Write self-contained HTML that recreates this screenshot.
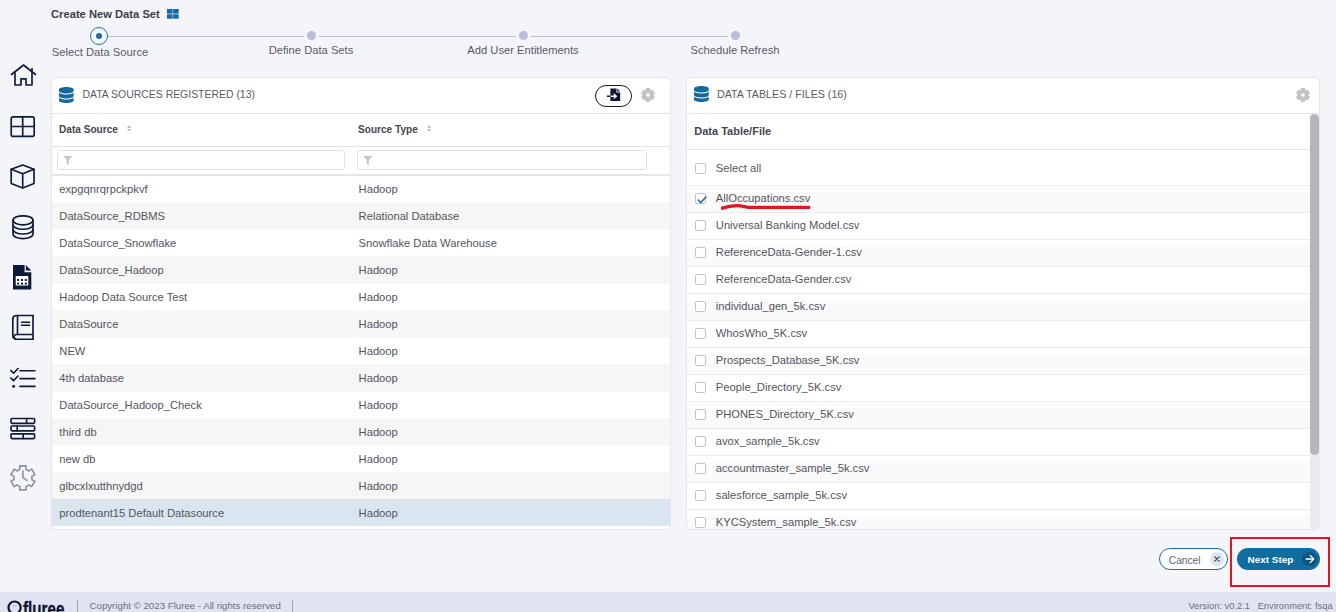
<!DOCTYPE html>
<html><head><meta charset="utf-8">
<style>
*{box-sizing:border-box;margin:0;padding:0}
html,body{width:1336px;height:612px;overflow:hidden}
body{background:#f4f5f9;font-family:"Liberation Sans",sans-serif;color:#4f4f55;position:relative}
.abs{position:absolute}
.title{left:51px;top:7.5px;font-size:11.2px;font-weight:bold;color:#3e3e48;white-space:nowrap}
.step-lbl{font-size:11.2px;color:#5a5a66;white-space:nowrap;transform:translateX(-50%)}
.panel{background:#fff;border:1px solid #e6e6ea;border-radius:5px;overflow:hidden}
.ptitle{font-size:10.45px;color:#5b5b66;white-space:nowrap}
.row{position:absolute;left:0;height:27px;font-size:11.2px;color:#55555d;white-space:nowrap}
.row span{position:absolute;top:7px}
.hr{position:absolute;height:1px;background:#e4e4e6}
.cb{position:absolute;width:10.4px;height:10.4px;border:1.3px solid #c4c4c6;border-radius:2px;background:#fff}
.foot{left:0;top:592px;width:1336px;height:20px;background:#e1e3f0}
.thd{font-size:10.1px;font-weight:bold;color:#45454e;white-space:nowrap;line-height:12px}
.thd2{font-size:11px;font-weight:bold;color:#45454e;white-space:nowrap;line-height:12px}
.sort{}
.finput{position:absolute;height:19.8px;border:1px solid #e2e2e4;border-radius:3px;background:#fff}
.rtxt{font-size:11.2px;color:#55555d;white-space:nowrap}
.frow{position:absolute;left:0;width:623px;height:27px;border-top:1px solid #ececee;font-size:11.2px;color:#55555d;white-space:nowrap;line-height:26px}
.frow.g{background:linear-gradient(#fff 0,#fff 6px,#fafafa 6px)}
.frow span{position:absolute;left:28.8px;top:-1.4px}
.frow .cb{left:8.3px;top:7.2px}
.row{line-height:27px}
.row span{top:0.8px}
</style></head><body>

<!-- sidebar icons -->
<svg class="abs" style="left:0;top:55px" width="48" height="450" viewBox="0 55 48 450" fill="none" stroke="#0d1a3a" stroke-width="1.65" stroke-linejoin="round" stroke-linecap="round">
  <!-- house -->
  <path d="M11.5 74.5 L23.5 65 L35.5 74.5"/>
  <path d="M32 68.5 V85 H26 V78.8 H21 V85 H15 V72"/>
  <!-- grid -->
  <rect x="11.2" y="116.8" width="23" height="19.6" rx="2"/>
  <path d="M22.7 117 V136 M11.5 126.5 H34"/>
  <!-- cube -->
  <path d="M22.7 165 L34 169.3 V183.5 L22.7 188 L11.2 183.5 V169.3 Z"/>
  <path d="M11.2 169.3 L22.7 173.8 L34 169.3 M22.7 173.8 V188"/>
  <!-- database -->
  <ellipse cx="23" cy="220.3" rx="10" ry="4.5"/>
  <path d="M13 220.3 V234 A10 4.6 0 0 0 33 234 V220.3"/>
  <path d="M13 224.8 A10 4.5 0 0 0 33 224.8 M13 229.5 A10 4.5 0 0 0 33 229.5"/>
  <!-- book -->
  <path d="M33 315.5 H16 A3.5 3.5 0 0 0 12.8 319 V336 A3.5 3.5 0 0 0 16 339.2 H33"/>
  <path d="M33 315.5 V339.2 M33 334.5 H16 A2.4 2.4 0 0 0 16 339.2"/>
  <path d="M17.5 316 V334.5"/>
  <path d="M21.5 322.2 H29.5 M21.5 325.2 H29.5"/>
  <!-- checklist -->
  <path d="M10.8 370.5 L13.5 373.2 L18 368.5 M10.8 378 L13.5 380.7 L18 376"/>
  <path d="M20 370.7 H35 M20 378.6 H35 M20 386.4 H35"/>
  <circle cx="13.6" cy="386.3" r="1.5" fill="#0d1a3a" stroke="none"/>
  <!-- table rows -->
  <rect x="11" y="418.5" width="23.6" height="4.8" rx="1"/>
  <rect x="11" y="426" width="23.6" height="4.8" rx="1"/>
  <rect x="11" y="433.8" width="23.6" height="4.8" rx="1"/>
  <path d="M26.6 418.5 V423.3 M17.2 426 V430.8 M23.2 433.8 V438.6"/>
</svg>
<svg class="abs" style="left:0;top:255px" width="48" height="40" viewBox="0 255 48 40">
  <path fill="#0d1a3a" d="M13 265 H24.6 V272.3 H31.3 V289.5 H13 Z M25.8 265 L31.3 270.5 H25.8 Z"/>
  <rect x="15.7" y="276" width="12.6" height="9.5" fill="#fff"/>
  <g fill="#0d1a3a"><rect x="17.2" y="279" width="2" height="2"/><rect x="21" y="279" width="2" height="2"/><rect x="24.8" y="279" width="2" height="2"/><rect x="17.2" y="282.6" width="2" height="2"/><rect x="21" y="282.6" width="2" height="2"/><rect x="24.8" y="282.6" width="2" height="2"/></g>
  
</svg>
<svg class="abs" style="left:0;top:460px" width="48" height="36" viewBox="0 460 48 36" fill="none" stroke="#8b90a4" stroke-width="1.6" stroke-linejoin="round">
  <path d="M19.90 469.20 L19.69 465.92 L26.11 465.92 L25.90 469.20 L28.94 470.96 L31.67 469.13 L34.88 474.69 L31.93 476.14 L31.93 479.66 L34.88 481.11 L31.67 486.67 L28.94 484.84 L25.90 486.60 L26.11 489.88 L19.69 489.88 L19.90 486.60 L16.86 484.84 L14.13 486.67 L10.92 481.11 L13.87 479.66 L13.87 476.14 L10.92 474.69 L14.13 469.13 L16.86 470.96Z"/>
  <path d="M22.9 471 V477.4 L26.8 480.4" stroke-linecap="round"/>
</svg>

<!-- title -->
<div class="abs title">Create New Data Set</div>
<svg class="abs" style="left:167.4px;top:8.8px" width="12" height="10" viewBox="0 0 12 10"><g fill="#136aa6"><rect x="0" y="0" width="5.6" height="4.6"/><rect x="6.1" y="0" width="5.6" height="4.6"/><rect x="0" y="5.3" width="5.6" height="4.4"/><rect x="6.1" y="5.3" width="5.6" height="4.4"/></g></svg>

<!-- stepper -->
<div class="abs" style="left:107px;top:36px;width:628px;height:1px;background:#b9bdd7"></div>
<div class="abs" style="left:90px;top:27px;width:18px;height:18px;border:1.5px solid #2878a6;border-radius:50%;background:#f4f5f9"></div>
<div class="abs" style="left:95.7px;top:32.7px;width:6.6px;height:6.6px;border-radius:50%;background:#1f6c9c"></div>
<div class="abs" style="left:307px;top:31px;width:9px;height:9px;border-radius:50%;background:#b9bdd7;box-shadow:0 0 0 3px #f4f5f9"></div>
<div class="abs" style="left:519px;top:31px;width:9px;height:9px;border-radius:50%;background:#b9bdd7;box-shadow:0 0 0 3px #f4f5f9"></div>
<div class="abs" style="left:731px;top:31px;width:9px;height:9px;border-radius:50%;background:#b9bdd7;box-shadow:0 0 0 3px #f4f5f9"></div>
<div class="abs step-lbl" style="left:100px;top:46.2px">Select Data Source</div>
<div class="abs step-lbl" style="left:311px;top:43.8px">Define Data Sets</div>
<div class="abs step-lbl" style="left:523px;top:43.8px">Add User Entitlements</div>
<div class="abs step-lbl" style="left:735px;top:43.8px">Schedule Refresh</div>

<!-- LEFT PANEL -->
<div class="abs panel" style="left:51px;top:77px;width:620px;height:453px">
  <svg class="abs" style="left:7px;top:9px" width="14.6" height="16" viewBox="0 0 448 512" preserveAspectRatio="none"><path fill="#15699e" d="M448 80v48c0 44.2-100.3 80-224 80S0 172.2 0 128V80C0 35.8 100.3 0 224 0S448 35.8 448 80zM393.2 214.7c20.8-7.4 39.9-16.9 54.8-28.6V288c0 44.2-100.3 80-224 80S0 332.2 0 288V186.1c14.9 11.8 34 21.2 54.8 28.6C99.7 230.7 159.5 240 224 240s124.3-9.3 169.2-25.3zM0 346.1c14.9 11.8 34 21.2 54.8 28.6C99.7 390.7 159.5 400 224 400s124.3-9.3 169.2-25.3c20.8-7.4 39.9-16.9 54.8-28.6V432c0 44.2-100.3 80-224 80S0 476.2 0 432V346.1z"/></svg>
  <div class="abs ptitle" style="left:30.5px;top:10.7px">DATA SOURCES REGISTERED (13)</div>
  <div class="abs" style="left:543px;top:7px;width:37px;height:22px;border:1.2px solid #141a3a;border-radius:11px"></div>
  <svg class="abs" style="left:554px;top:9.5px" width="16" height="14" viewBox="606 87.5 16 14"><path fill="#0e1636" d="M610.4 87.9 H616.5 V92 H620.2 V100.5 H610.4 Z M617.3 87.9 L620.2 90.9 H617.3 Z"/><path d="M606.9 95.7 H616" stroke="#0e1636" stroke-width="1.4"/><path d="M610.6 95.7 H615.6" stroke="#fff" stroke-width="1.4"/><path fill="#fff" d="M613.8 92.6 L617.3 95.7 L613.8 98.8 Z"/></svg>
  <svg class="abs" style="left:589px;top:10px" width="14" height="14" viewBox="0 0 14 14"><path fill="#c4c4c6" fill-rule="evenodd" stroke="#c4c4c6" stroke-width="1" stroke-linejoin="round" d="M4.97 2.43 L5.27 0.53 L8.73 0.53 L9.03 2.43 L9.94 2.95 L11.74 2.26 L13.47 5.27 L11.97 6.48 L11.97 7.52 L13.47 8.73 L11.74 11.74 L9.94 11.05 L9.03 11.57 L8.73 13.47 L5.27 13.47 L4.97 11.57 L4.06 11.05 L2.26 11.74 L0.53 8.73 L2.03 7.52 L2.03 6.48 L0.53 5.27 L2.26 2.26 L4.06 2.95Z M7 4.7 A2.3 2.3 0 1 0 7 9.3 A2.3 2.3 0 1 0 7 4.7Z"/></svg>
  <div class="hr" style="top:35px;left:0;width:618px"></div>
  <div class="abs thd" style="left:7px;top:46px">Data Source</div>
  <svg class="abs sort" style="left:74.6px;top:47.2px" width="4.4" height="6.6" viewBox="0 0 5 7"><path fill="#b4b4b8" d="M2.5 0 L5 2.8 H0Z M0 4.2 H5 L2.5 7Z"/></svg>
  <div class="abs thd" style="left:306px;top:46px">Source Type</div>
  <svg class="abs sort" style="left:374.6px;top:47.2px" width="4.4" height="6.6" viewBox="0 0 5 7"><path fill="#b4b4b8" d="M2.5 0 L5 2.8 H0Z M0 4.2 H5 L2.5 7Z"/></svg>
  <div class="hr" style="top:68px;left:0;width:618px"></div>
  <div class="abs finput" style="left:5.4px;top:72.4px;width:288px"></div>
  <div class="abs finput" style="left:305.4px;top:72.4px;width:290px"></div>
  <svg class="abs" style="left:11px;top:77.8px" width="9.5" height="9.2" viewBox="0 0 9 9"><path fill="#c9c9cc" d="M0 0 H9 L5.6 4.2 V9 L3.4 7.6 V4.2Z"/></svg>
  <svg class="abs" style="left:311px;top:77.8px" width="9.5" height="9.2" viewBox="0 0 9 9"><path fill="#c9c9cc" d="M0 0 H9 L5.6 4.2 V9 L3.4 7.6 V4.2Z"/></svg>
  <div class="hr" style="top:96px;left:0;width:618px;height:2px;background:#e6e6e8"></div>
<div class="row" style="top:97.00px;height:27px;width:618px;background:transparent"><span style="left:7.3px">expgqnrqrpckpkvf</span><span style="left:306.6px">Hadoop</span></div>
<div class="row" style="top:124.00px;height:27.5px;width:618px;background:#f6f6f6"><span style="left:7.3px">DataSource_RDBMS</span><span style="left:306.6px">Relational Database</span></div>
<div class="row" style="top:151.00px;height:27px;width:618px;background:transparent"><span style="left:7.3px">DataSource_Snowflake</span><span style="left:306.6px">Snowflake Data Warehouse</span></div>
<div class="row" style="top:178.00px;height:27.5px;width:618px;background:#f6f6f6"><span style="left:7.3px">DataSource_Hadoop</span><span style="left:306.6px">Hadoop</span></div>
<div class="row" style="top:205.00px;height:27px;width:618px;background:transparent"><span style="left:7.3px">Hadoop Data Source Test</span><span style="left:306.6px">Hadoop</span></div>
<div class="row" style="top:232.00px;height:27.5px;width:618px;background:#f6f6f6"><span style="left:7.3px">DataSource</span><span style="left:306.6px">Hadoop</span></div>
<div class="row" style="top:259.00px;height:27px;width:618px;background:transparent"><span style="left:7.3px">NEW</span><span style="left:306.6px">Hadoop</span></div>
<div class="row" style="top:286.00px;height:27.5px;width:618px;background:#f6f6f6"><span style="left:7.3px">4th database</span><span style="left:306.6px">Hadoop</span></div>
<div class="row" style="top:313.00px;height:27px;width:618px;background:transparent"><span style="left:7.3px">DataSource_Hadoop_Check</span><span style="left:306.6px">Hadoop</span></div>
<div class="row" style="top:340.00px;height:27.5px;width:618px;background:#f6f6f6"><span style="left:7.3px">third db</span><span style="left:306.6px">Hadoop</span></div>
<div class="row" style="top:367.00px;height:27px;width:618px;background:transparent"><span style="left:7.3px">new db</span><span style="left:306.6px">Hadoop</span></div>
<div class="row" style="top:394.00px;height:27.5px;width:618px;background:#f6f6f6"><span style="left:7.3px">glbcxlxutthnydgd</span><span style="left:306.6px">Hadoop</span></div>
<div class="row" style="top:421.40px;height:26.6px;width:618px;background:#d9e6f0"><span style="left:7.3px">prodtenant15 Default Datasource</span><span style="left:306.6px">Hadoop</span></div>
</div>

<!-- RIGHT PANEL -->
<div class="abs panel" style="left:686px;top:77px;width:634px;height:453px">
  <svg class="abs" style="left:6.8px;top:8px" width="14.8" height="16" viewBox="0 0 448 512" preserveAspectRatio="none"><path fill="#15699e" d="M448 80v48c0 44.2-100.3 80-224 80S0 172.2 0 128V80C0 35.8 100.3 0 224 0S448 35.8 448 80zM393.2 214.7c20.8-7.4 39.9-16.9 54.8-28.6V288c0 44.2-100.3 80-224 80S0 332.2 0 288V186.1c14.9 11.8 34 21.2 54.8 28.6C99.7 230.7 159.5 240 224 240s124.3-9.3 169.2-25.3zM0 346.1c14.9 11.8 34 21.2 54.8 28.6C99.7 390.7 159.5 400 224 400s124.3-9.3 169.2-25.3c20.8-7.4 39.9-16.9 54.8-28.6V432c0 44.2-100.3 80-224 80S0 476.2 0 432V346.1z"/></svg>
  <div class="abs ptitle" style="left:30px;top:10px;font-size:10.7px">DATA TABLES / FILES (16)</div>
  <svg class="abs" style="left:609px;top:10px" width="14" height="14" viewBox="0 0 14 14"><path fill="#c4c4c6" fill-rule="evenodd" stroke="#c4c4c6" stroke-width="1" stroke-linejoin="round" d="M4.97 2.43 L5.27 0.53 L8.73 0.53 L9.03 2.43 L9.94 2.95 L11.74 2.26 L13.47 5.27 L11.97 6.48 L11.97 7.52 L13.47 8.73 L11.74 11.74 L9.94 11.05 L9.03 11.57 L8.73 13.47 L5.27 13.47 L4.97 11.57 L4.06 11.05 L2.26 11.74 L0.53 8.73 L2.03 7.52 L2.03 6.48 L0.53 5.27 L2.26 2.26 L4.06 2.95Z M7 4.7 A2.3 2.3 0 1 0 7 9.3 A2.3 2.3 0 1 0 7 4.7Z"/></svg>
  <div class="hr" style="top:35px;left:0;width:632px"></div>
  <div class="abs thd2" style="left:7.3px;top:47px">Data Table/File</div>
  <div class="hr" style="top:71px;left:0;width:623px"></div>
  <i class="cb" style="left:8.3px;top:85.2px"></i>
  <div class="abs rtxt" style="left:28.8px;top:76.5px;line-height:27px">Select all</div>
<div class="frow g" style="top:107px"><i class="cb"></i><svg class="abs" style="left:9.5px;top:10px" width="11" height="8" viewBox="0 0 11 8"><path d="M0.7 3.5 L3.75 6.6 L9.3 0.5" fill="none" stroke="#1f6ea3" stroke-width="1.5"/></svg><span>AllOccupations.csv</span></div>
<div class="frow" style="top:134px;background:transparent"><i class="cb"></i><span>Universal Banking Model.csv</span></div>
<div class="frow g" style="top:161px"><i class="cb"></i><span>ReferenceData-Gender-1.csv</span></div>
<div class="frow" style="top:188px;background:transparent"><i class="cb"></i><span>ReferenceData-Gender.csv</span></div>
<div class="frow g" style="top:215px"><i class="cb"></i><span>individual_gen_5k.csv</span></div>
<div class="frow" style="top:242px;background:transparent"><i class="cb"></i><span>WhosWho_5K.csv</span></div>
<div class="frow g" style="top:269px"><i class="cb"></i><span>Prospects_Database_5K.csv</span></div>
<div class="frow" style="top:296px;background:transparent"><i class="cb"></i><span>People_Directory_5K.csv</span></div>
<div class="frow g" style="top:323px"><i class="cb"></i><span>PHONES_Directory_5K.csv</span></div>
<div class="frow" style="top:350px;background:transparent"><i class="cb"></i><span>avox_sample_5k.csv</span></div>
<div class="frow g" style="top:377px"><i class="cb"></i><span>accountmaster_sample_5k.csv</span></div>
<div class="frow" style="top:404px;background:transparent"><i class="cb"></i><span>salesforce_sample_5k.csv</span></div>
<div class="frow g" style="top:431px"><i class="cb"></i><span>KYCSystem_sample_5k.csv</span></div>
  <div class="abs" style="left:623px;top:36px;width:9px;height:416px;background:#ebebef;border-radius:4.5px"></div>
  <div class="abs" style="left:623px;top:36px;width:9px;height:341px;background:#b6b6b8;border-radius:4.5px"></div>
  <svg class="abs" style="left:34px;top:125px" width="92" height="8" viewBox="0 0 92 8"><path d="M1.5 5.2 C6 3.5 11 2.5 16 2.6 C22 2.7 24 4.4 28 4.4 L87.8 4.4" fill="none" stroke="#e0191e" stroke-width="3.4" stroke-linecap="round"/></svg>
</div>

<!-- buttons -->
<div class="abs" style="left:1159px;top:548px;width:69px;height:22px;border:1px solid #1e6f9e;border-radius:11px;background:#fff"></div>
<div class="abs" style="left:1168.8px;top:549.6px;line-height:22px;font-size:10.2px;color:#5b6577;white-space:nowrap">Cancel</div>
<div class="abs" style="left:1210px;top:552.3px;width:13.8px;height:13.8px;border-radius:50%;background:#dfe7ee"></div>
<svg class="abs" style="left:1213.9px;top:556.2px" width="6" height="6" viewBox="0 0 6 6"><path d="M0.8 0.8 L5.2 5.2 M5.2 0.8 L0.8 5.2" stroke="#2c4566" stroke-width="1.2" stroke-linecap="round"/></svg>
<div class="abs" style="left:1237px;top:548px;width:83px;height:22px;border-radius:11px;background:#0f6e9f"></div>
<div class="abs" style="left:1247.5px;top:548.8px;line-height:22px;font-size:9.95px;font-weight:bold;color:#fff;white-space:nowrap">Next Step</div>
<div class="abs" style="left:1302px;top:551.7px;width:14.8px;height:14.8px;border-radius:50%;background:#0c5480"></div>
<svg class="abs" style="left:1304.5px;top:554px" width="10" height="10" viewBox="0 0 10 10"><path d="M1 5 H8.6 M5.2 1.4 L8.8 5 L5.2 8.6" fill="none" stroke="#fff" stroke-width="1.3" stroke-linecap="round" stroke-linejoin="round"/></svg>
<div class="abs" style="left:1230px;top:537px;width:100px;height:50px;border:2.8px solid #e3151f"></div>

<!-- footer -->
<div class="abs foot"></div>
<svg class="abs" style="left:0;top:596px" width="30" height="16" viewBox="0 596 30 16">
  <circle cx="14.6" cy="607.6" r="6.1" fill="none" stroke="#0e1433" stroke-width="2.2"/>
  <path d="M13 606 H14 M15.4 606 H16.4" stroke="#0e1433" stroke-width="0.8" opacity="0.6"/>
</svg>
<div class="abs" style="left:23px;top:598.5px;font-size:20px;font-weight:bold;color:#0e1433;line-height:20px;white-space:nowrap;transform:scaleX(0.76);transform-origin:0 0;-webkit-text-stroke:0.3px #0e1433">fluree</div>
<div class="abs" style="left:77px;top:600px;width:1px;height:12px;background:#a4a6b0"></div>
<div class="abs" style="left:89.5px;top:598.5px;font-size:9.7px;color:#6e707a;line-height:14px;white-space:nowrap">Copyright &#169; 2023 Fluree - All rights reserved</div>
<div class="abs" style="left:292px;top:600px;width:1px;height:12px;background:#a4a6b0"></div>
<div class="abs" style="left:1188.4px;top:598.8px;font-size:9.3px;color:#6e707a;line-height:14px;white-space:pre">Version: v0.2.1   Environment: fsqa</div>
</body></html>
